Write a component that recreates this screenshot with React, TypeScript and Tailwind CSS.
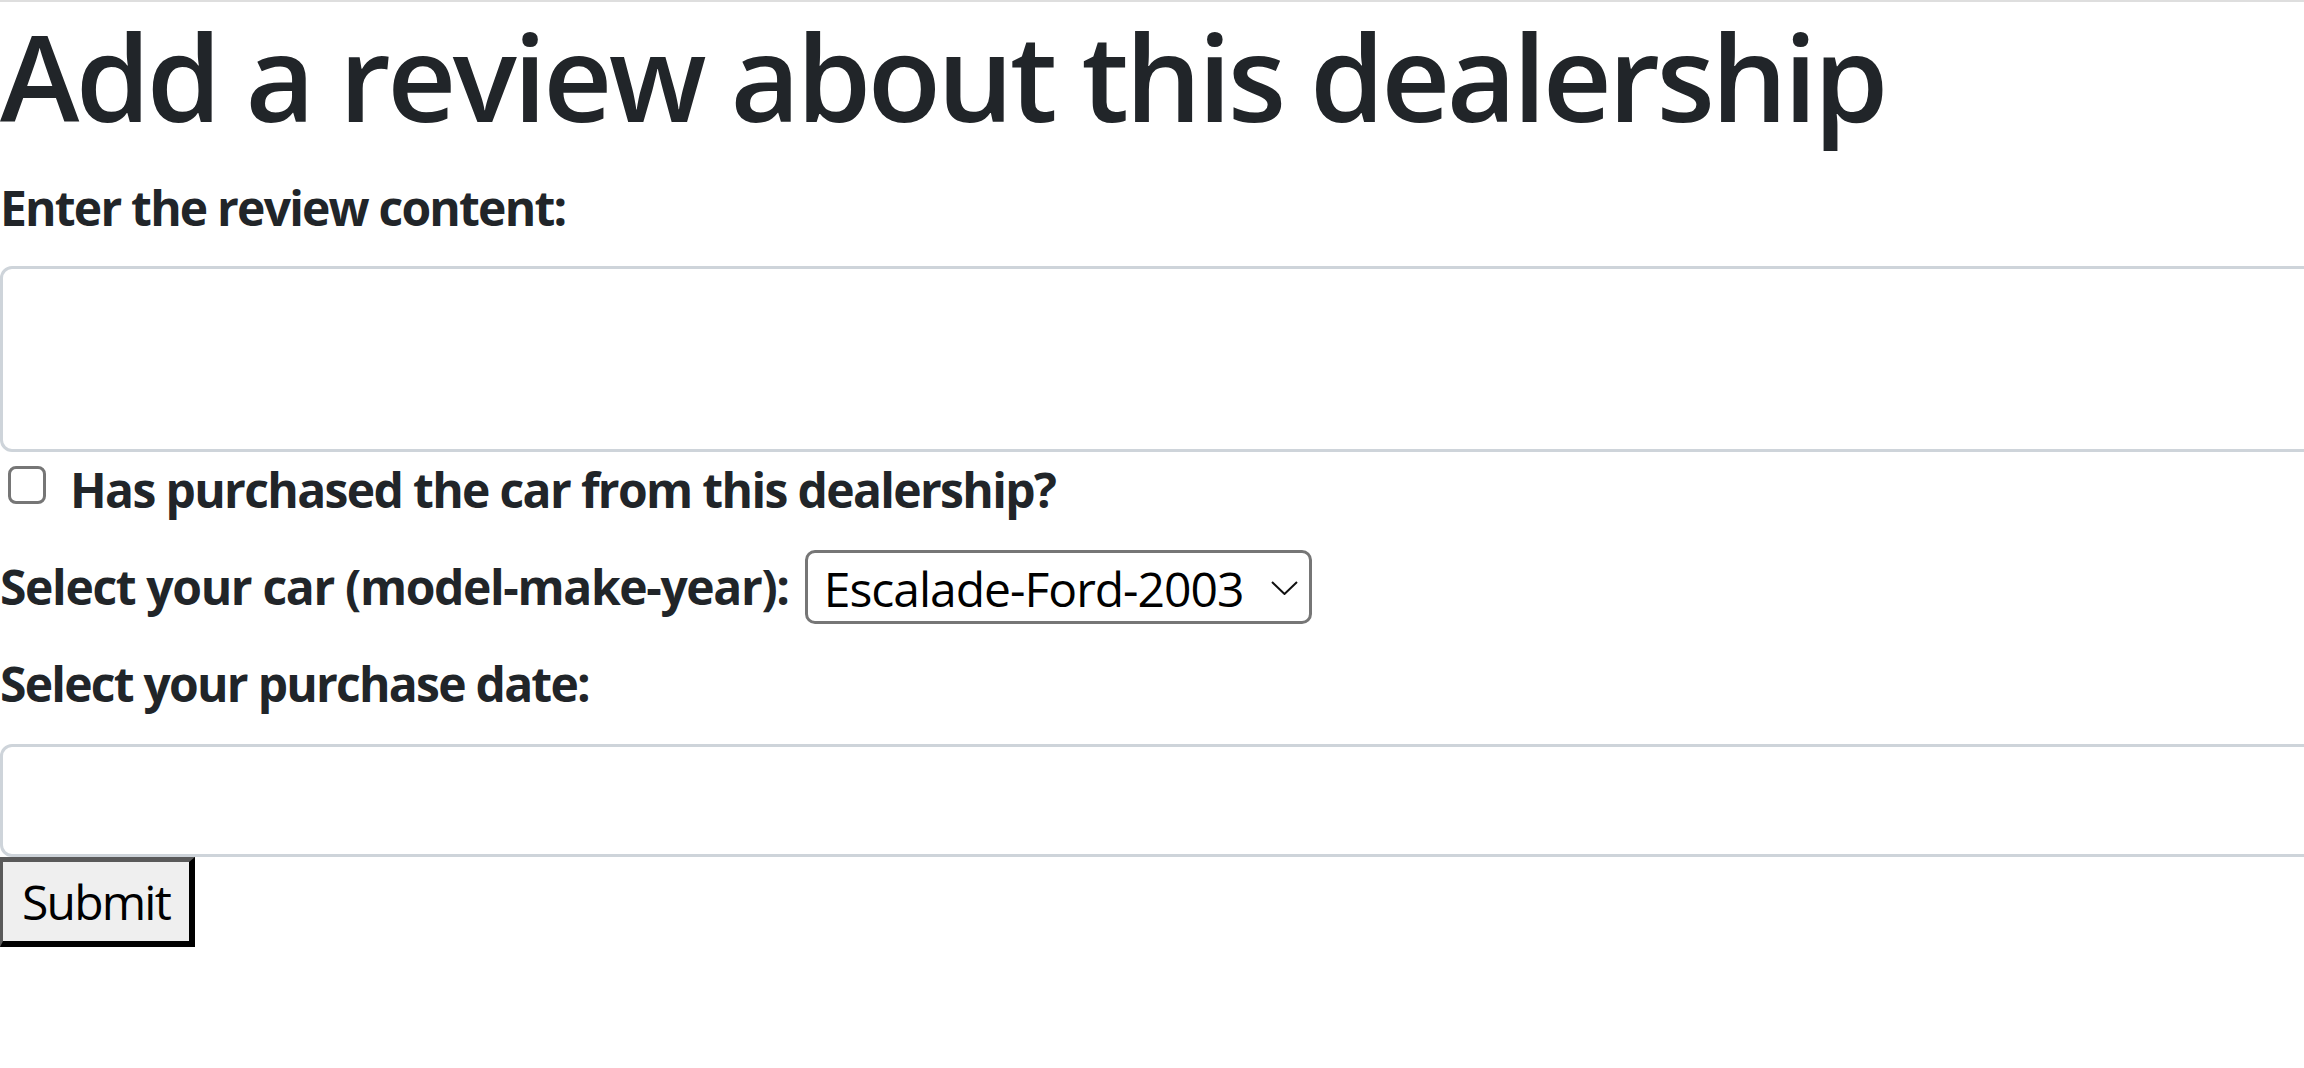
import React, { ReactElement } from 'react';

const cars = ['Escalade-Ford-2003', 'Pilot-Honda-2019', 'Sierra-GMC-2012'];

const App = (): ReactElement => {
  return (
    <div className="min-h-screen w-full overflow-hidden bg-white font-['Open_Sans',sans-serif] text-[#212529]">
      <div className="h-[2px] w-full bg-[#dedede]" />
      <h1 className="mt-[2px] mb-[24px] text-[120px] leading-[144px] font-semibold tracking-[-3.6px]">
        Add a review about this dealership
      </h1>

      <b className="block text-[48px] leading-[72px] font-bold tracking-[-1.8px]">
        Enter the review content:
      </b>
      {/* the form controls run past the right edge of the window */}
      <textarea className="mt-[22px] block h-[186px] w-[calc(100%+24px)] resize-none rounded-[12px] border-[3px] border-[#ced4da] bg-white outline-none" />

      <div className="mt-[2px] flex h-[72px] items-start">
        <input
          type="checkbox"
          className="mt-[12px] ml-[8px] h-[38px] w-[38px] appearance-none rounded-[8px] border-[3px] border-[#767676] bg-white"
        />
        <b className="ml-[24px] text-[48px] leading-[72px] font-bold tracking-[-1.65px]">
          Has purchased the car from this dealership?
        </b>
      </div>

      <div className="mt-[24px] flex h-[74px] items-center">
        <b className="text-[48px] leading-[74px] font-bold tracking-[-1.35px]">
          Select your car (model-make-year):
        </b>
        <div className="relative ml-[16px]">
          <select
            defaultValue={cars[0]}
            className="block h-[74px] w-[507px] appearance-none rounded-[10px] border-[3px] border-[#767676] bg-white pl-[16px] pr-[50px] text-[48px] tracking-[-1px] text-black outline-none"
          >
            {cars.map((car) => (
              <option key={car} value={car}>
                {car}
              </option>
            ))}
          </select>
          <svg
            className="pointer-events-none absolute top-[31px] right-[14px] h-[14px] w-[27px]"
            viewBox="0 0 27 14"
            fill="none"
            stroke="#111"
            strokeWidth="2"
          >
            <path d="M1 1 L13.5 13 L26 1" />
          </svg>
        </div>
      </div>

      <b className="mt-[24px] block text-[48px] leading-[72px] font-bold tracking-[-1.75px]">
        Select your purchase date:
      </b>
      <input
        type="text"
        className="mt-[24px] block h-[113px] w-[calc(100%+24px)] rounded-[12px] border-[3px] border-[#ced4da] bg-white outline-none"
      />

      <button className="block h-[90px] w-[195px] border-t-[5px] border-r-[6px] border-b-[6px] border-l-[3px] border-t-[#5a5a5a] border-r-black border-b-black border-l-[#5a5a5a] bg-[#efefef] pl-[19px] text-left text-[48px] tracking-[-1.8px] text-black">
        Submit
      </button>
    </div>
  );
};

export default App;
